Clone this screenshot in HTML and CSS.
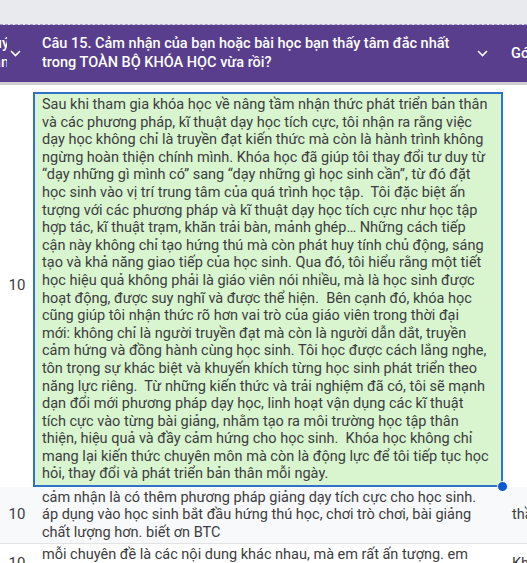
FILE: index.html
```html
<!DOCTYPE html>
<html lang="vi">
<head>
<meta charset="utf-8">
<link rel="stylesheet" href="styles.css">
</head>
<body>
<div class="sheet">
  <div class="topbar"></div>
  <div class="header">
    <div class="hcell hcell-left">
      <div class="clip-text"><div class="clip-line"><span>quý</span></div><div class="clip-line"><span>bạn</span></div></div>
      <svg class="chev" width="11" height="7" viewBox="0 0 11 7"><path d="M1 1 L5.5 5.5 L10 1" fill="none" stroke="#fff" stroke-width="1.6"/></svg>
    </div>
    <div class="hcell hcell-main">
      <div class="htitle">Câu 15. Cảm nhận của bạn hoặc bài học bạn thấy tâm đắc nhất<br>trong TOÀN BỘ KHÓA HỌC vừa rồi?</div>
      <svg class="chev" width="11" height="7" viewBox="0 0 11 7"><path d="M1 1 L5.5 5.5 L10 1" fill="none" stroke="#fff" stroke-width="1.6"/></svg>
    </div>
    <div class="hcell hcell-right">Góp ý</div>
  </div>
  <div class="hline"></div>

  <div class="row row-selected">
    <div class="num">10</div>
    <div class="main">
      <div class="editbox">
        <span>Sau khi tham gia khóa học về nâng tầm nhận thức phát triển bản thân</span>
        <span>và các phương pháp, kĩ thuật dạy học tích cực, tôi nhận ra rằng việc</span>
        <span>dạy học không chỉ là truyền đạt kiến thức mà còn là hành trình không</span>
        <span>ngừng hoàn thiện chính mình. Khóa học đã giúp tôi thay đổi tư duy từ</span>
        <span>“dạy những gì mình có” sang “dạy những gì học sinh cần”, từ đó đặt</span>
        <span>học sinh vào vị trí trung tâm của quá trình học tập.&nbsp; Tôi đặc biệt ấn</span>
        <span>tượng với các phương pháp và kĩ thuật dạy học tích cực như học tập</span>
        <span>hợp tác, kĩ thuật trạm, khăn trải bàn, mảnh ghép… Những cách tiếp</span>
        <span>cận này không chỉ tạo hứng thú mà còn phát huy tính chủ động, sáng</span>
        <span>tạo và khả năng giao tiếp của học sinh. Qua đó, tôi hiểu rằng một tiết</span>
        <span>học hiệu quả không phải là giáo viên nói nhiều, mà là học sinh được</span>
        <span>hoạt động, được suy nghĩ và được thể hiện.&nbsp; Bên cạnh đó, khóa học</span>
        <span>cũng giúp tôi nhận thức rõ hơn vai trò của giáo viên trong thời đại</span>
        <span>mới: không chỉ là người truyền đạt mà còn là người dẫn dắt, truyền</span>
        <span>cảm hứng và đồng hành cùng học sinh. Tôi học được cách lắng nghe,</span>
        <span>tôn trọng sự khác biệt và khuyến khích từng học sinh phát triển theo</span>
        <span>năng lực riêng.&nbsp; Từ những kiến thức và trải nghiệm đã có, tôi sẽ mạnh</span>
        <span>dạn đổi mới phương pháp dạy học, linh hoạt vận dụng các kĩ thuật</span>
        <span>tích cực vào từng bài giảng, nhằm tạo ra môi trường học tập thân</span>
        <span>thiện, hiệu quả và đầy cảm hứng cho học sinh.&nbsp; Khóa học không chỉ</span>
        <span>mang lại kiến thức chuyên môn mà còn là động lực để tôi tiếp tục học</span>
        <span>hỏi, thay đổi và phát triển bản thân mỗi ngày.</span>
        <div class="handle"></div>
      </div>
    </div>
    <div class="side"></div>
  </div>

  <div class="row row-alt">
    <div class="num">10</div>
    <div class="main text">
      <span>cảm nhận là có thêm phương pháp giảng dạy tích cực cho học sinh.</span>
      <span>áp dụng vào học sinh bắt đầu hứng thú học, chơi trò chơi, bài giảng</span>
      <span>chất lượng hơn. biết ơn BTC</span>
    </div>
    <div class="side">thầy cô</div>
  </div>

  <div class="row row-plain">
    <div class="num">10</div>
    <div class="main text">
      <span>mỗi chuyên đề là các nội dung khác nhau, mà em rất ấn tượng. em</span>
      <span>rất thích các hoạt động trải nghiệm trong khóa học.</span>
    </div>
    <div class="side">Không</div>
  </div>
</div>
</body>
</html>
```

FILE: styles.css
```css
* { box-sizing: border-box; }
html, body { margin: 0; padding: 0; background: #ffffff; }
body {
  font-family: Roboto, "Noto Sans", "Liberation Sans", sans-serif;
  width: 527px;
  height: 563px;
  overflow: hidden;
}
.sheet {
  display: flex;
  flex-direction: column;
  width: 527px;
}
.topbar {
  height: 25px;
  background: #e9eaed;
  border-bottom: 1px dashed #a995c9;
}
.header {
  height: 57px;
  background: #583e8c;
  display: grid;
  grid-template-columns: 33px 469px 1fr;
  color: #ffffff;
  font-size: 14.5px;
  font-weight: 500;
}
.hcell {
  display: flex;
  align-items: center;
  overflow: hidden;
  white-space: nowrap;
}
.hcell-left {
  justify-content: flex-end;
  padding-right: 12px;
  gap: 3px;
}
.clip-text {
  display: flex;
  flex-direction: column;
  line-height: 19px;
  width: 9px;
  overflow: hidden;
  margin-top: -2px;
}
.clip-line {
  display: flex;
  justify-content: flex-end;
  width: 9px;
}
.clip-line span { flex: none; }
.hcell-main {
  padding-left: 9px;
  padding-right: 14px;
  justify-content: space-between;
}
.htitle {
  line-height: 19px;
  margin-top: -2px;
}
.chev { flex: none; }
.hcell-right {
  padding-left: 9px;
  font-weight: 500;
}
.hline {
  height: 3px;
  background: #cfcfd2;
}
.row {
  display: grid;
  grid-template-columns: 33px 469px 1fr;
  color: #3c3d40;
  font-size: 14.5px;
  line-height: 17.6px;
}
.num {
  display: flex;
  align-items: center;
  justify-content: center;
  padding-left: 1px;
  font-size: 15px;
}
.side {
  display: flex;
  align-items: center;
  padding-left: 10px;
  white-space: nowrap;
  overflow: hidden;
}
.row-selected {
  height: 402px;
}
.main {
  display: flex;
  flex-direction: column;
}
.row-selected .main {
  padding-top: 7px;
}
.editbox {
  position: relative;
  flex: 1;
  background: #d8f5cf;
  border: 2px solid #2e72c9;
  padding: 2px 4px 0 7px;
  display: flex;
  flex-direction: column;
  margin-right: -1px;
}
.editbox span, .text span {
  display: block;
  white-space: nowrap;
}
.handle {
  position: absolute;
  right: -7px;
  bottom: -7px;
  width: 11px;
  height: 11px;
  border-radius: 50%;
  background: #0b57d0;
  border: 1px solid #ffffff;
}
.row-alt {
  height: 57px;
  background: #f8f9fa;
  border-bottom: 1px solid #e3e3e3;
}
.text {
  justify-content: center;
  padding-left: 9px;
}
.row-plain {
  height: 40px;
}
```
